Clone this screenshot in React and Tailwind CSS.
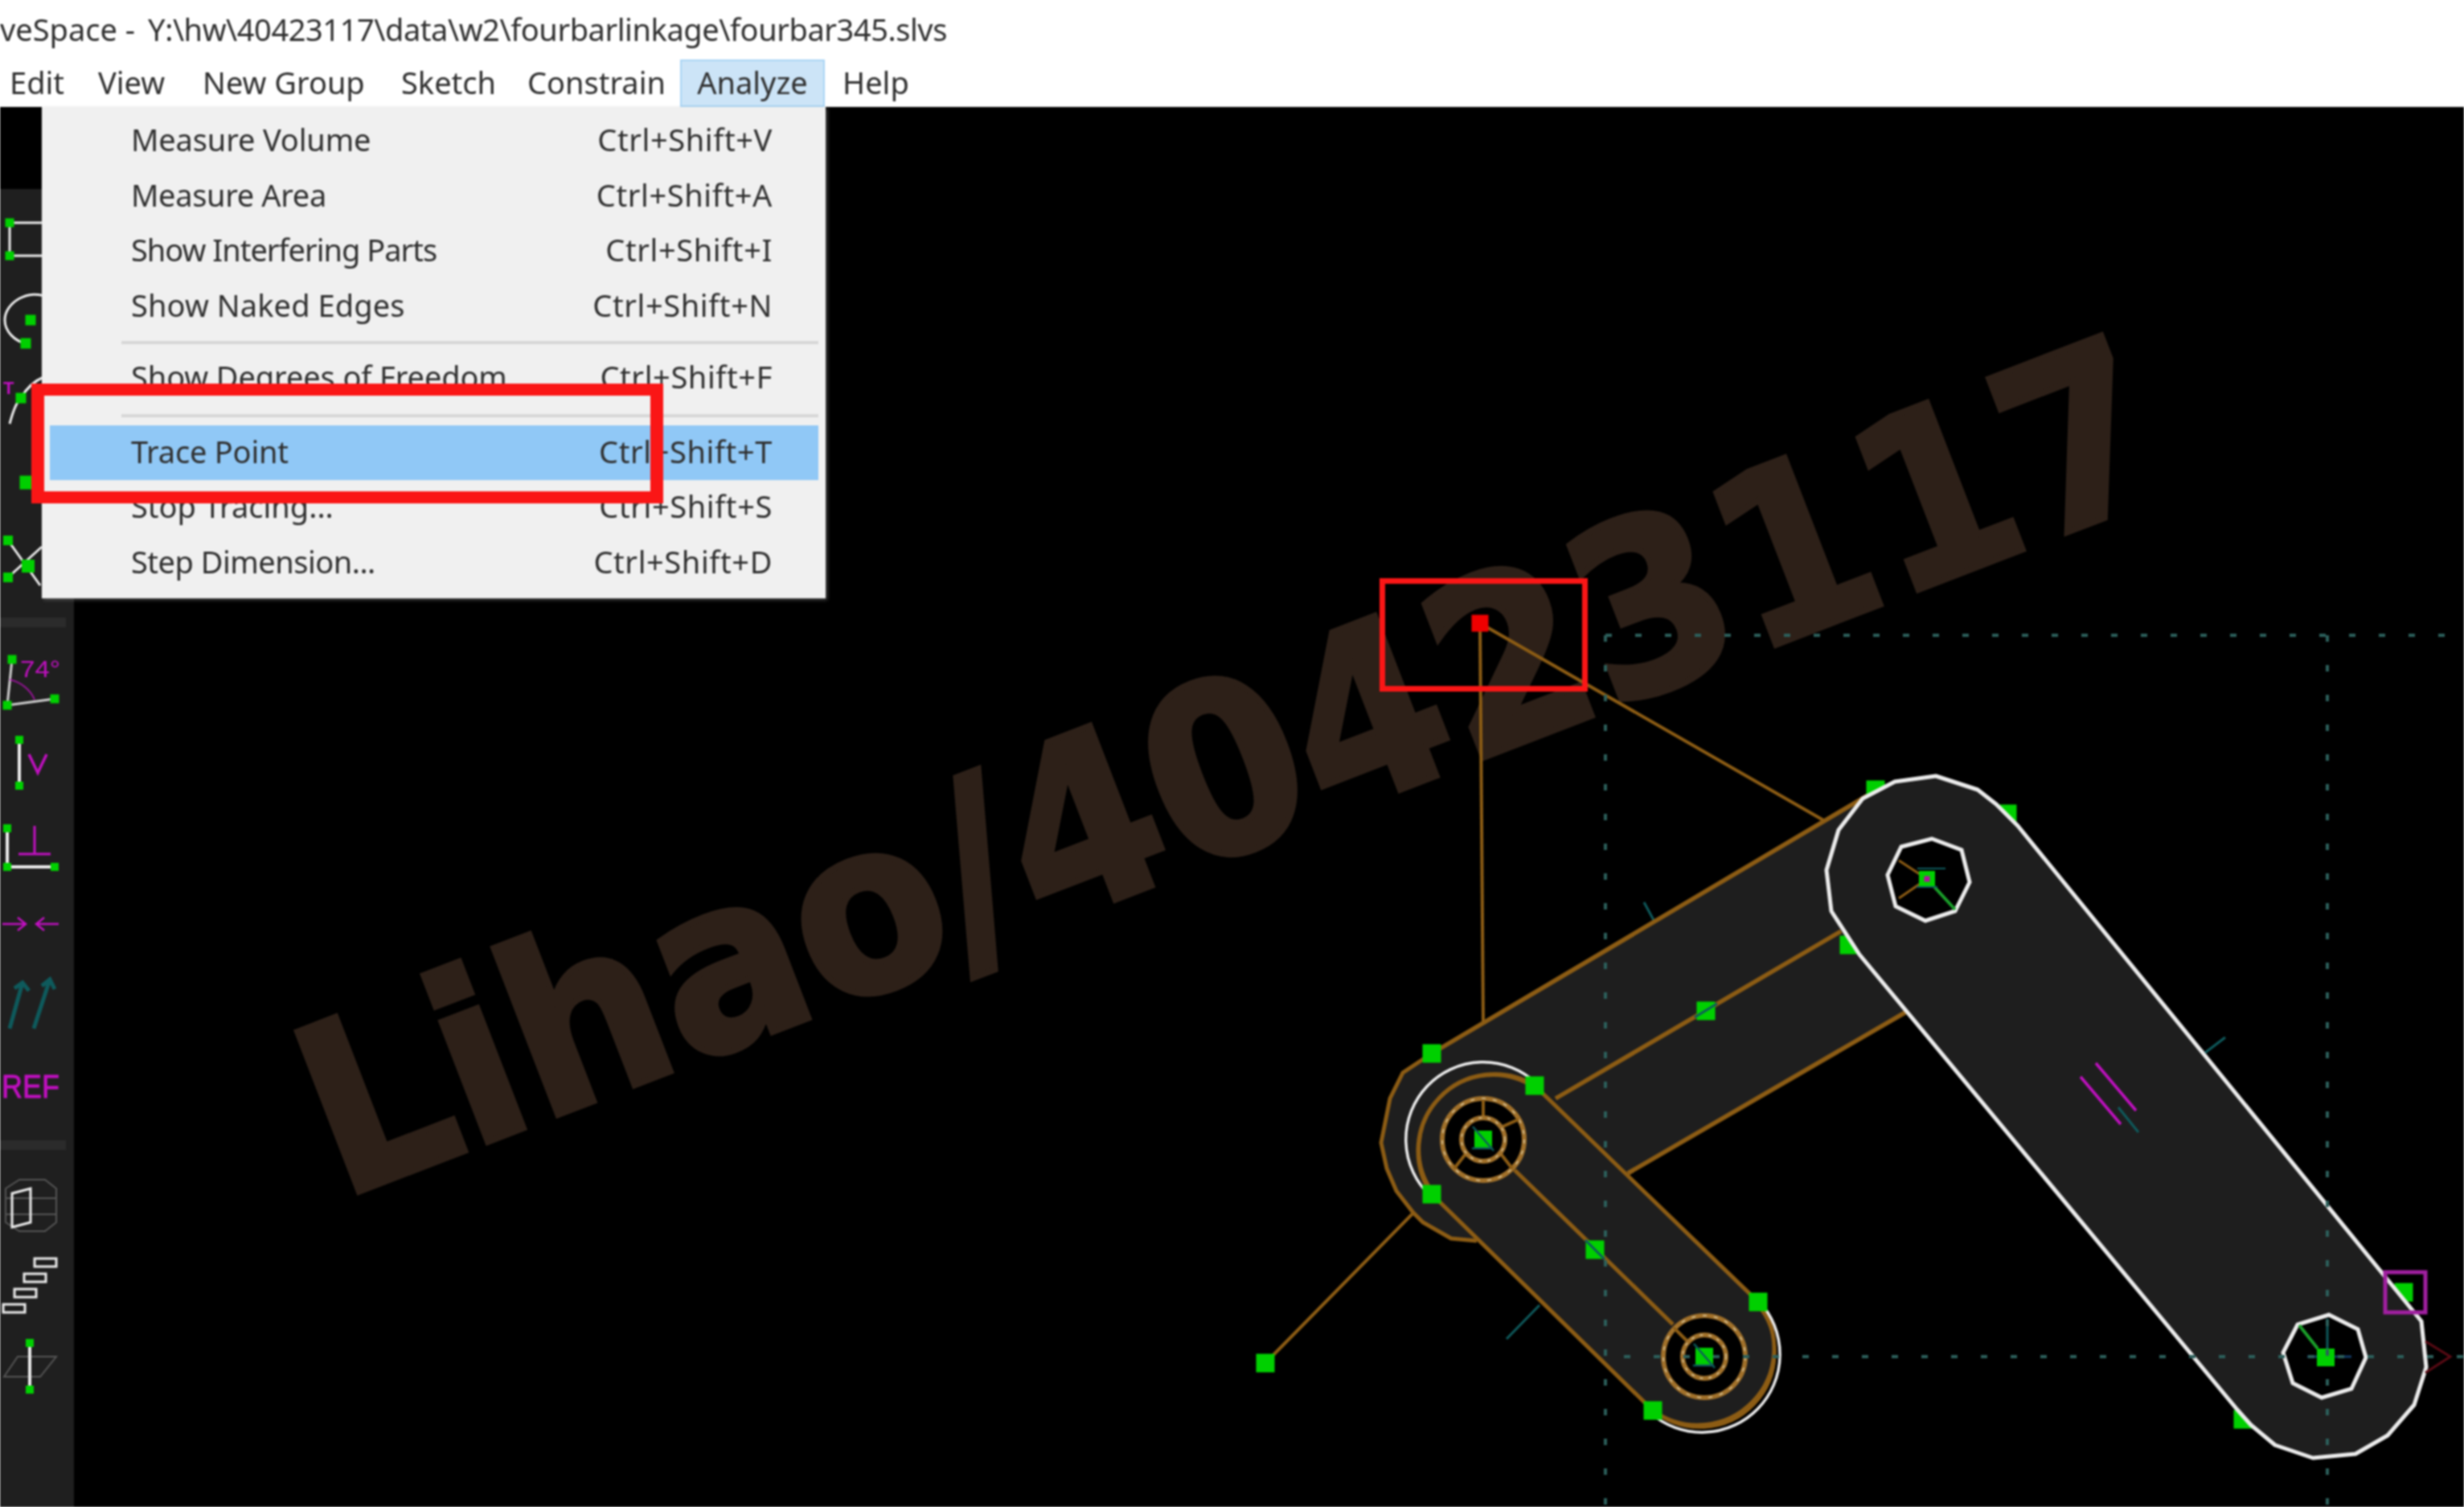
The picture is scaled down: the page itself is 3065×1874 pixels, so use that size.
import React from 'react';

/* SolveSpace screenshot: Analyze menu open over a four-bar sketch.
   Both svgs use page coordinates through their viewBox. */

const GREEN = '#00d000', BROWN = '#8c5c14', WHITE = '#ececec', LINK = '#1e1e1e', TEAL = '#0e5a5c', MAG = '#c010c0';

const MENU = [
  ['Measure Volume', 'Ctrl+Shift+V', 'tracking-[-0.15px]'],
  ['Measure Area', 'Ctrl+Shift+A', 'tracking-[-0.35px]'],
  ['Show Interfering Parts', 'Ctrl+Shift+I', 'tracking-[-1px]'],
  ['Show Naked Edges', 'Ctrl+Shift+N', 'tracking-[0.1px]'],
  null,
  ['Show Degrees of Freedom', 'Ctrl+Shift+F', 'tracking-[-0.1px]'],
  null,
  ['Trace Point', 'Ctrl+Shift+T', 'tracking-[-0.2px]', true],
  ['Stop Tracing...', 'Ctrl+Shift+S', 'tracking-normal'],
  ['Step Dimension...', 'Ctrl+Shift+D', 'tracking-[-0.5px]'],
];

function Pt({ x, y, s = 23, c = GREEN }) {
  return <rect x={x - s / 2} y={y - s / 2} width={s} height={s} fill={c} />;
}

function L({ p, c = BROWN, w = 4, o }) {
  return <line x1={p[0]} y1={p[1]} x2={p[2]} y2={p[3]} stroke={c} strokeWidth={w} opacity={o} />;
}

function Toolbar() {
  return (
    <svg width="92" height="1639" viewBox="0 235 92 1639" className="block">
      <g fill="none" stroke={WHITE} strokeWidth="3">
        <path d="M92 277H12V318H92" />
        <path d="M60 370C36 358 6 376 6 398C6 412 18 424 32 427" />
        <path d="M12 527C16 512 20 500 26 495C32 484 42 474 56 468" />
        <path d="M10 672L50 728M10 718L52 680" />
      </g>
      <Pt x={12} y={277} s={11} /><Pt x={12} y={318} s={11} />
      <Pt x={38} y={398} s={13} /><Pt x={32} y={427} s={13} />
      <text x="4" y="490" fill={MAG} fontSize="22" fontWeight="700" fontFamily="'Liberation Sans', sans-serif">T</text>
      <Pt x={26} y={495} s={13} />
      <Pt x={33} y={600} s={17} />
      <Pt x={10} y={672} s={12} /><Pt x={10} y={718} s={12} /><Pt x={35} y={704} s={16} />

      <rect x="0" y="768" width="82" height="12" fill="#2b2b2b" />
      <path d="M15 820L9 877L68 869" fill="none" stroke="#cfcfcf" strokeWidth="3" />
      <path d="M12 845C26 848 38 858 43 870" fill="none" stroke={MAG} strokeWidth="2" opacity="0.7" />
      <text x="25" y="842" fill={MAG} fontSize="30" textLength="50" lengthAdjust="spacingAndGlyphs" fontFamily="'Liberation Sans', sans-serif">74°</text>
      <Pt x={15} y={820} s={11} /><Pt x={9} y={877} s={11} /><Pt x={68} y={869} s={11} />

      <L p={[24, 920, 24, 977]} c={WHITE} w={4} />
      <Pt x={24} y={920} s={10} /><Pt x={24} y={977} s={10} />
      <path d="M36 938L47 961L58 938" fill="none" stroke={MAG} strokeWidth="3.5" />

      <path d="M9 1030V1078H68" fill="none" stroke={WHITE} strokeWidth="4" />
      <Pt x={9} y={1030} s={10} /><Pt x={9} y={1078} s={10} /><Pt x={68} y={1078} s={10} />
      <path d="M23 1062H63M43 1027V1062" fill="none" stroke={MAG} strokeWidth="3" />

      <path d="M3 1149H32M22 1141L32 1149L22 1157M73 1149H45M55 1141L45 1149L55 1157" fill="none" stroke={MAG} strokeWidth="2.5" />
      <path d="M12 1279L28 1222M18 1229L28 1222L36 1232M42 1279L62 1218M52 1226L62 1218L68 1230" fill="none" stroke={TEAL} strokeWidth="5" />
      <text x="2" y="1365" fill={MAG} fontSize="40" textLength="72" lengthAdjust="spacingAndGlyphs" stroke={MAG} strokeWidth="0.8" fontFamily="'Liberation Sans', sans-serif">REF</text>

      <rect x="0" y="1418" width="82" height="12" fill="#2b2b2b" />
      <path d="M7 1478L24 1467H56L70 1478V1520L56 1531H24L7 1520ZM7 1490H70M7 1510H70" fill="none" stroke="#555" strokeWidth="2" />
      <path d="M15 1484L38 1478V1520L15 1526Z" fill="none" stroke={WHITE} strokeWidth="3" />
      <g fill="none" stroke={WHITE} strokeWidth="3">
        <rect x="43" y="1565" width="27" height="10" />
        <rect x="30" y="1584" width="27" height="10" />
        <rect x="18" y="1603" width="27" height="10" />
        <rect x="4" y="1622" width="27" height="10" />
      </g>
      <path d="M5 1712L22 1687H70L50 1712Z" fill="none" stroke="#555" strokeWidth="2" />
      <L p={[37, 1670, 37, 1728]} c={WHITE} w={4} />
      <Pt x={37} y={1670} s={10} /><Pt x={37} y={1728} s={10} />
    </svg>
  );
}

function Hub({ x, y, spokes }) {
  return (
    <g>
      <circle cx={x} cy={y} r={51} fill="#000" stroke="#a0702a" strokeWidth="6" />
      <circle cx={x} cy={y} r={51} fill="none" stroke="#d8c8a0" strokeWidth="1.5" strokeDasharray="5 9" />
      {spokes.map((s, i) => <L key={i} p={[x + s[0], y + s[1], x + s[2], y + s[3]]} w={4} />)}
      <circle cx={x} cy={y} r={27} fill="#000" stroke="#a0702a" strokeWidth="6" />
      <circle cx={x} cy={y} r={27} fill="none" stroke="#d8c8a0" strokeWidth="1.5" strokeDasharray="4 7" />
      <Pt x={x} y={y} s={22} />
      <path d={`M${x - 13} ${y - 16}L${x + 13} ${y + 14}M${x - 14} ${y + 11}H${x + 12}`} stroke={TEAL} strokeWidth="2.5" fill="none" />
    </g>
  );
}

function Sketch() {
  const rightLink = 'M2408 965L2357 972L2317 993L2287 1032L2272 1082L2278 1133L2313 1187L2783 1753L2800 1772L2830 1797L2877 1813L2930 1808L2970 1785L3003 1747L3018 1700L3012 1643L2510 1027L2483 1000L2460 982Z';
  const holeC = 'M2403 1043L2440 1057L2450 1097L2432 1133L2395 1145L2358 1127L2348 1088L2365 1053Z';
  const holeD = 'M2897 1635L2933 1653L2943 1688L2925 1727L2888 1738L2852 1720L2840 1682L2858 1647Z';
  const smallLink = 'M1909 1350L2187 1619A95 95 0 0 1 2056 1754L1781 1485A95 95 0 0 1 1909 1350Z';
  const cap = 'L1745 1334L1729 1366L1718 1421L1725 1453L1737 1481L1758 1508L1770 1520L1805 1540L1837 1543';
  return (
    <svg width="2973" height="1741" viewBox="92 133 2973 1741" className="block">
      <text x="420" y="1482" transform="rotate(-21.1 445 1478)" fill="#2d2018" stroke="#2d2018" strokeWidth="8" fontSize="292" fontWeight="700" textLength="2452" lengthAdjust="spacingAndGlyphs" fontFamily="'DejaVu Sans', sans-serif">Lihao/40423117</text>

      <L p={[1841, 775, 1845, 1270]} w={4} />
      <L p={[1841, 775, 2270, 1021]} w={4} />
      <L p={[1574, 1695, 1781, 1485]} w={4} />
      <L p={[2045, 1122, 2058, 1146]} c={TEAL} w={3} />
      <L p={[1915, 1623, 1874, 1665]} c={TEAL} w={3} />

      <path d={`M1781 1310${cap}L2025 1459L2370 1259L2335 982Z`} fill={LINK} />
      <path d={`M1781 1310${cap}`} fill="none" stroke={BROWN} strokeWidth="5" />
      <L p={[1781, 1310, 2335, 982]} w={5.5} />
      <L p={[1935, 1366, 2290, 1158]} w={5.5} />
      <L p={[2025, 1459, 2370, 1259]} w={5.5} />
      <Pt x={2122} y={1257} />
      <L p={[2108, 1265, 2136, 1248]} c={TEAL} w={3} />

      <Pt x={2333} y={982} /><Pt x={2497} y={1012} /><Pt x={2300} y={1175} />
      <Pt x={2790} y={1765} /><Pt x={2990} y={1607} />

      <path d={rightLink} fill={LINK} stroke={WHITE} strokeWidth="5" strokeLinejoin="round" />
      <path d={holeC} fill="#000" stroke={WHITE} strokeWidth="5" />
      <path d={holeD} fill="#000" stroke={WHITE} strokeWidth="5" />

      <path d={smallLink} fill={LINK} stroke={BROWN} strokeWidth="5" />
      <path d="M1779 1487A96 96 0 0 1 1911 1347M2053 1757A97 97 0 0 0 2188 1618" fill="none" stroke={WHITE} strokeWidth="3.5" />
      <path d="M1782 1482A92 92 0 0 1 1909 1353M2056 1754A93 93 0 0 0 2185 1621" fill="none" stroke={BROWN} strokeWidth="4" />
      <L p={[1884, 1455, 2081, 1647]} w={5} />
      <Hub x={1845} y={1417} spokes={[[0, -50, 0, -27], [24, -16, 44, -25], [22, 18, 36, 36], [-22, 18, -36, 36]]} />
      <Hub x={2120} y={1687} spokes={[[-22, -20, -38, -36]]} />
      <Pt x={1781} y={1310} /><Pt x={1909} y={1350} /><Pt x={1781} y={1485} />
      <Pt x={1984} y={1554} /><Pt x={2187} y={1619} /><Pt x={2056} y={1754} />
      <L p={[1972, 1542, 1996, 1566]} c={TEAL} w={3} />
      <Pt x={1574} y={1695} />

      <path d="M2362 1070L2397 1093M2362 1117L2397 1093" stroke={BROWN} strokeWidth="3" fill="none" />
      <L p={[2397, 1093, 2432, 1131]} c="#1aa02a" w={4} />
      <Pt x={2397} y={1093} s={20} />
      <path d="M2385 1080H2420M2384 1103H2410" stroke={TEAL} strokeWidth="2" fill="none" />
      <Pt x={2397} y={1093} s={7} c="#b014a0" />

      <L p={[2860, 1648, 2883, 1677]} c="#1aa02a" w={4} />
      <L p={[2895, 1640, 2895, 1680]} c={TEAL} w={3} />
      <L p={[2870, 1687, 2925, 1687]} c="#123a66" w={3} />
      <Pt x={2893} y={1688} s={22} />

      <L p={[2588, 1339, 2638, 1398]} c={MAG} w={3.5} />
      <L p={[2607, 1322, 2657, 1381]} c={MAG} w={3.5} />
      <L p={[2635, 1377, 2660, 1408]} c={TEAL} w={3} />
      <L p={[2743, 1309, 2768, 1290]} c={TEAL} w={3} />

      <g stroke="#2c5f5b" strokeWidth="4" strokeDasharray="8 29" fill="none">
        <path d="M1997 790H3045" />
        <path d="M1997 790V1874" />
        <path d="M2895 790V1874" />
        <path d="M2020 1687H3065" />
      </g>

      <path d="M3017 1668L3048 1687L3017 1707" fill="none" stroke="#5a0a14" strokeWidth="3" />
      <rect x="2967" y="1582" width="50" height="50" fill="none" stroke="#a01fa0" strokeWidth="5" />
      <Pt x={1841} y={775} s={21} c="#f00000" />
    </svg>
  );
}

function MenuBarItem({ children, className }) {
  return <span className={`whitespace-nowrap ${className || ''}`}>{children}</span>;
}

export default function App() {
  return (
    <div className="relative w-[3065px] h-[1874px] overflow-hidden bg-white">
      {/* soft upscaled look; the filter box runs past the left and top edge so it doesn't fade there */}
      <div className="-ml-[4px] -mt-[4px] pl-[4px] pt-[4px] w-[3069px] h-[1878px] bg-white blur-[0.8px]">
        <div className="relative w-[3065px] h-[1874px] text-[#2f2f2f] font-['Noto_Sans',sans-serif] text-[38px] leading-none">
          <div className="h-[74px] flex items-center pb-[3px] overflow-hidden whitespace-nowrap">
            <span className="mr-[6px]">veSpace -</span>
            <span className="ml-[10px] tracking-[-0.43px]">Y:\hw\40423117\data\w2\fourbarlinkage\fourbar345.slvs</span>
          </div>
          <div className="h-[59px] flex items-center pl-[12px] pb-[3px]">
            <MenuBarItem className="w-[110px]">Edit</MenuBarItem>
            <MenuBarItem className="w-[130px]">View</MenuBarItem>
            <MenuBarItem className="w-[247px]">New Group</MenuBarItem>
            <MenuBarItem className="w-[157px]">Sketch</MenuBarItem>
            <MenuBarItem className="w-[190px]">Constrain</MenuBarItem>
            <span className="w-[180px] h-[59px] flex items-center justify-center pb-[3px] -mb-[3px] bg-[#cce4f7] border-2 border-[#a8d4f5]">Analyze</span>
            <MenuBarItem className="ml-[22px]">Help</MenuBarItem>
          </div>
          <div className="flex h-[1741px] bg-black">
            <div className="w-[92px] shrink-0 pt-[102px]">
              <div className="bg-[#1f1f1f]"><Toolbar /></div>
            </div>
            <Sketch />
          </div>

          {/* open Analyze menu */}
          <div className="absolute left-[52px] top-[133px] w-[975px] h-[611px] bg-[#f0f0f0] pt-[8px] pl-[10px] pr-[9px] shadow-[2px_2px_4px_rgba(120,120,120,0.6)]">
            {MENU.map((m, i) => m ? (
              <div key={i} className={`h-[68.5px] flex items-center justify-between pl-[101px] pr-[57px] pb-[4px] ${m[3] ? 'bg-[#90c8f6]' : ''}`}>
                <span className={m[2]}>{m[0]}</span>
                <span className="tracking-[0.6px]">{m[1]}</span>
              </div>
            ) : (
              <div key={i} className={`${i === 4 ? 'h-[21px]' : 'h-[24px]'} flex items-center pl-[89px]`}>
                <div className="w-full h-[4px] bg-[#d7d7d7]" />
              </div>
            ))}
          </div>

          {/* red annotation boxes */}
          <div className="absolute left-[39px] top-[477px] w-[786px] h-[149px] border-x-[16px] border-y-[15px] border-[#fa1616]" />
          <div className="absolute left-[1716px] top-[719px] w-[259px] h-[141px] border-[7px] border-[#fa1616]" />
        </div>
      </div>
    </div>
  );
}
